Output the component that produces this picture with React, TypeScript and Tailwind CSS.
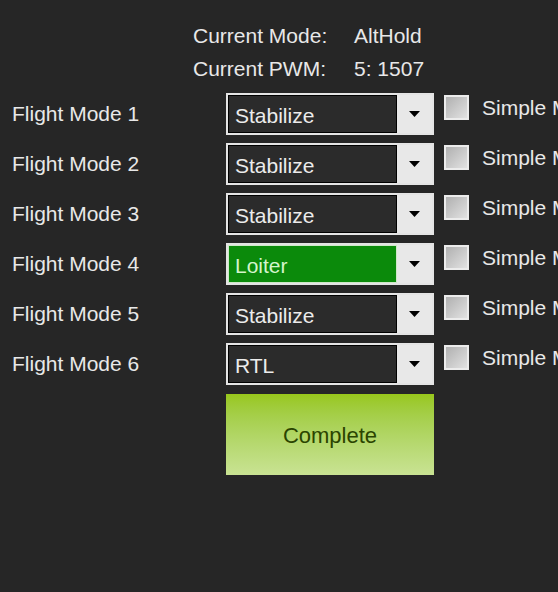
import React from "react";

const modes = ["Stabilize", "Stabilize", "Stabilize", "Loiter", "Stabilize", "RTL"];

function Combo({ value, active }: { value: string; active?: boolean }) {
  return (
    <div className="flex h-[42px] w-[208px] shrink-0 border-2 border-[#e4e4e4] bg-[#e8e8e8]">
      <div
        className={
          active
            ? "flex flex-1 items-center border border-[#cfe8c8] bg-[#0b8a0b] pl-[6px] pt-[3px] text-[#d4f5cc]"
            : "flex flex-1 items-center border border-black bg-[#2b2b2b] pl-[6px] pt-[3px] text-[#ececec]"
        }
      >
        {value}
      </div>
      <div className="flex w-[35px] items-center justify-center bg-[#e8e8e8]">
        <svg width="11" height="6" viewBox="0 0 11 6">
          <path d="M0 0 L11 0 L5.5 6 Z" fill="#000" />
        </svg>
      </div>
    </div>
  );
}

function Check() {
  return (
    <div className="mt-[2px] h-[25px] w-[25px] shrink-0 self-start border-2 border-[#ececec] bg-gradient-to-br from-[#b0b0b0] to-[#e2e2e2]" />
  );
}

export default function App() {
  return (
    <div
      className="h-[592px] w-[558px] overflow-hidden bg-[#262626] text-[21px] text-[#e8e8e8]"
      style={{ fontFamily: '"Liberation Sans", Arial, sans-serif' }}
    >
      <div className="grid grid-cols-[161px_auto] pl-[193px] pt-[19px] leading-[33px]">
        <div>Current Mode:</div>
        <div>AltHold</div>
        <div>Current PWM:</div>
        <div>5: 1507</div>
      </div>
      <div className="mt-[8px] flex flex-col gap-[8px]">
        {modes.map((m, i) => (
          <div key={i} className="flex items-center whitespace-nowrap">
            <div className="w-[226px] shrink-0 pl-[12px]">Flight Mode {i + 1}</div>
            <Combo value={m} active={m === "Loiter"} />
            <div className="ml-[10px] flex items-center self-stretch">
              <Check />
              <div className="ml-[13px] self-start leading-[29px]">Simple Mode</div>
            </div>
          </div>
        ))}
      </div>
      <div className="ml-[226px] mt-[9px] flex h-[81px] w-[208px] items-center justify-center bg-gradient-to-b from-[#98c71a] to-[#c9e393] pt-[2px] text-[22px] text-[#2a4400]">
        Complete
      </div>
    </div>
  );
}
